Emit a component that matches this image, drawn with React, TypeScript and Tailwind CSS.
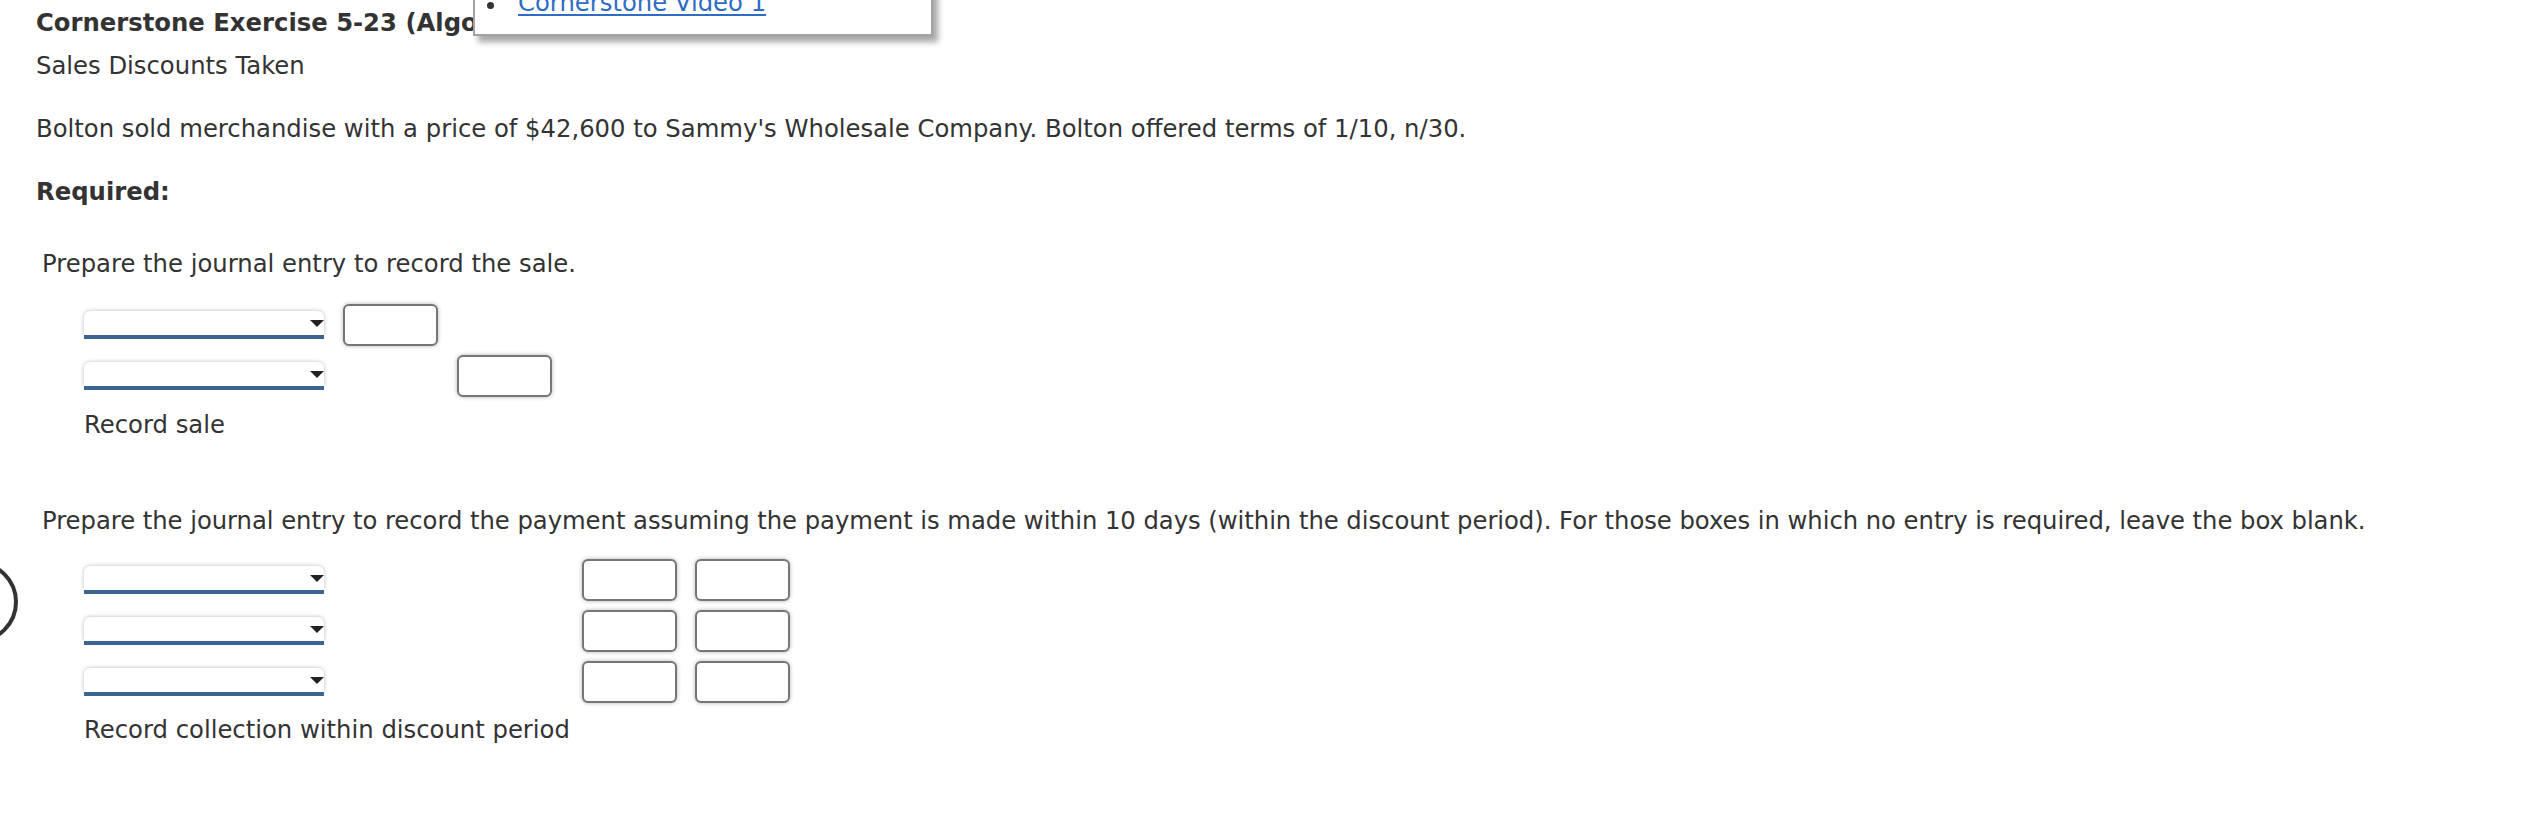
import React from "react"

function Dropdown() {
  return (
    <div className="relative h-[28px] w-[240px]">
      <div className="h-[24px] w-full rounded-t-[6px] bg-white shadow-[0_0_4px_rgba(0,0,0,0.28)]" />
      <div className="h-[4px] w-full bg-[#3b6492]" />
      <svg className="absolute right-0 top-[9px]" width="14" height="7" viewBox="0 0 14 7">
        <polygon points="0,0 14,0 7,7" fill="#222" />
      </svg>
    </div>
  )
}

function AmountBox() {
  return (
    <div className="h-[42px] w-[95px] rounded-[6px] border-2 border-[#767676] bg-white shadow-[0_0_4px_rgba(0,0,0,0.3)]" />
  )
}

export default function App() {
  return (
    <div className="relative h-[814px] w-full overflow-hidden bg-white font-['DejaVu_Sans',sans-serif] text-[24.3px] leading-[36px] text-[#333]">
      {/* circle peeking at the left edge */}
      <div className="absolute left-[-64px] top-[561px] h-[82px] w-[82px] rounded-full border-4 border-[#333]" />

      {/* popup with video link */}
      <div className="absolute left-[473px] top-[-32px] z-10 h-[68px] w-[460px] border-2 border-[#a3a3a3] bg-white shadow-[5px_6px_6px_rgba(0,0,0,0.35)]">
        <div className="relative pl-[43px] pt-[15px]">
          <span className="absolute left-[12px] top-[32px] h-[7px] w-[7px] rounded-full bg-[#333]" />
          <a className="text-[#2f6cc4] underline decoration-[2px] underline-offset-[3px]" href="#">
            Cornerstone Video 1
          </a>
        </div>
      </div>

      <div className="pl-[36px] pt-[5px]">
        <h1 className="font-bold">Cornerstone Exercise 5-23 (Algorithmic)</h1>
        <p className="mt-[7px]">Sales Discounts Taken</p>
        <p className="mt-[27px]">
          Bolton sold merchandise with a price of $42,600 to Sammy's Wholesale Company. Bolton offered terms of 1/10, n/30.
        </p>
        <p className="mt-[27px] font-bold">Required:</p>
      </div>

      {/* part 1 */}
      <div className="mt-[36px] pl-[42px]">
        <p>Prepare the journal entry to record the sale.</p>
        <div className="mt-[22px] flex flex-col gap-[9px] pl-[42px]">
          <div className="flex h-[42px] items-center">
            <Dropdown />
            <div className="ml-[19px]">
              <AmountBox />
            </div>
          </div>
          <div className="flex h-[42px] items-center">
            <Dropdown />
            <div className="ml-[133px]">
              <AmountBox />
            </div>
          </div>
        </div>
        <p className="mt-[10px] pl-[42px]">Record sale</p>
      </div>

      {/* part 2 */}
      <div className="mt-[60px] pl-[42px]">
        <p className="tracking-[-0.04px]">
          Prepare the journal entry to record the payment assuming the payment is made within 10 days (within the discount period). For those boxes in which no entry is required, leave the box blank.
        </p>
        <div className="mt-[20px] flex flex-col gap-[9px] pl-[42px]">
          {[0, 1, 2].map((i) => (
            <div key={i} className="flex h-[42px] items-center">
              <Dropdown />
              <div className="ml-[258px] flex gap-[18px]">
                <AmountBox />
                <AmountBox />
              </div>
            </div>
          ))}
        </div>
        <p className="mt-[9px] pl-[42px]">Record collection within discount period</p>
      </div>
    </div>
  )
}
